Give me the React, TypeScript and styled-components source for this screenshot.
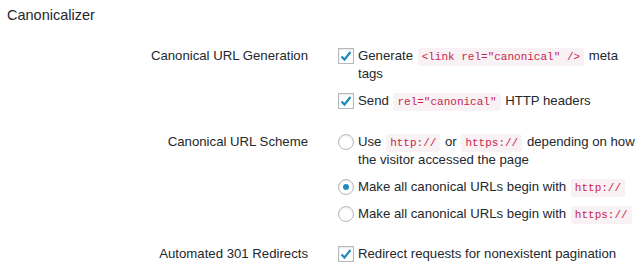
import React from "react";
import styled, { createGlobalStyle } from "styled-components";

const Global = createGlobalStyle`
  html, body { margin: 0; padding: 0; background: #fff; }
  body { font-family: "Liberation Sans", Arial, sans-serif; color: #444; font-size: 13px; }
`;

const Page = styled.div`
  width: 640px;
  padding-top: 5px;
`;

const Heading = styled.h2`
  margin: 0 0 12px 7px;
  font-size: 14.5px;
  line-height: 20px;
  font-weight: 400;
  color: #23282d;
`;

const Table = styled.div`
  display: grid;
  grid-template-columns: 308px 300px;
  column-gap: 30px;
`;

const Label = styled.div`
  text-align: right;
  padding: 10px 0 12.5px;
  line-height: 18px;
  font-size: 13.2px;
  color: #23282d;
`;

const Field = styled.div`
  padding: 10px 0 12.5px;
  display: flex;
  flex-direction: column;
  gap: 9px;
`;

const Option = styled.label`
  display: flex;
  align-items: flex-start;
  gap: 4px;
  line-height: 18px;
  font-size: 13.2px;
  color: #23282d;
`;

const Box = styled.span<{ $round?: boolean }>`
  flex: none;
  width: 14px;
  height: 14px;
  margin-top: 1px;
  border: 1px solid #b4b9be;
  border-radius: ${(p) => (p.$round ? "50%" : "0")};
  box-shadow: inset 0 1px 2px rgba(0, 0, 0, 0.1);
  background: #fff;
  display: flex;
  align-items: center;
  justify-content: center;
`;

const Dot = styled.span`
  width: 6px;
  height: 6px;
  border-radius: 50%;
  background: #1e8cbe;
`;

const Code = styled.code`
  font-family: "Liberation Mono", "DejaVu Sans Mono", monospace;
  font-size: 11px;
  line-height: 12px;
  color: #c7254e;
  background: #f9f2f4;
  border-radius: 3px;
  padding: 3px 4px;
  margin: 0 1px;
`;

const Check = () => (
  <svg width="14" height="14" viewBox="0 0 14 14">
    <path d="M2.5 7.5 L5.5 10.5 L11.5 3" fill="none" stroke="#1e8cbe" strokeWidth="2.2" strokeLinejoin="miter" />
  </svg>
);

const CheckBox = () => (
  <Box>
    <Check />
  </Box>
);

const Radio = ({ on }: { on?: boolean }) => <Box $round>{on && <Dot />}</Box>;

export default function App() {
  return (
    <Page>
      <Global />
      <Heading>Canonicalizer</Heading>
      <Table>
        <Label>Canonical URL Generation</Label>
        <Field>
          <Option>
            <CheckBox />
            <span>
              Generate <Code>&lt;link rel="canonical" /&gt;</Code> meta tags
            </span>
          </Option>
          <Option>
            <CheckBox />
            <span>
              Send <Code>rel="canonical"</Code> HTTP headers
            </span>
          </Option>
        </Field>

        <Label>Canonical URL Scheme</Label>
        <Field>
          <Option>
            <Radio />
            <span>
              Use <Code>http://</Code> or <Code>https://</Code> depending on how the visitor accessed the page
            </span>
          </Option>
          <Option>
            <Radio on />
            <span>
              Make all canonical URLs begin with <Code>http://</Code>
            </span>
          </Option>
          <Option>
            <Radio />
            <span>
              Make all canonical URLs begin with <Code>https://</Code>
            </span>
          </Option>
        </Field>

        <Label>Automated 301 Redirects</Label>
        <Field>
          <Option>
            <CheckBox />
            <span>Redirect requests for nonexistent pagination</span>
          </Option>
        </Field>
      </Table>
    </Page>
  );
}
